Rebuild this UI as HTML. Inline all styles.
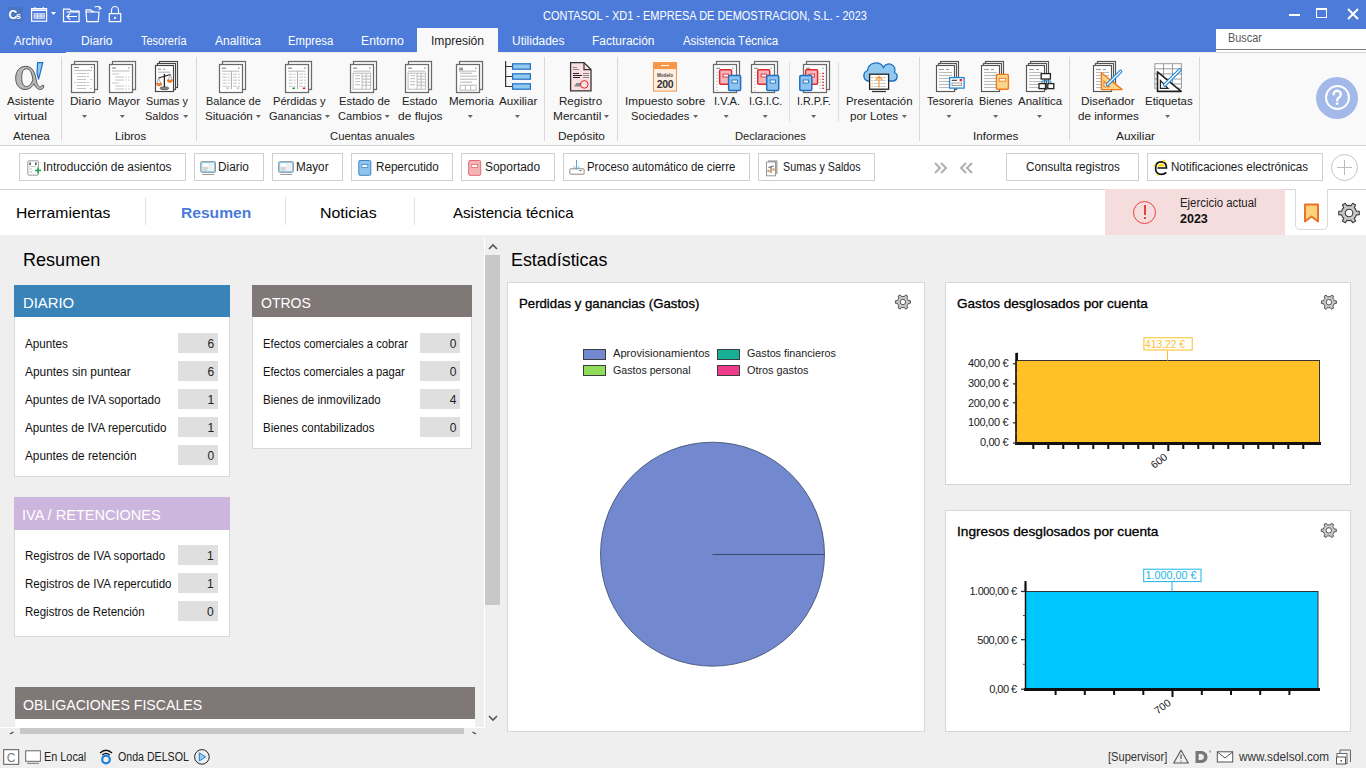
<!DOCTYPE html>
<html><head><meta charset="utf-8"><style>
*{margin:0;padding:0;box-sizing:border-box}
html,body{width:1366px;height:768px;overflow:hidden;background:#efefef;font-family:"Liberation Sans", sans-serif}
.a{position:absolute}
.t{position:absolute;white-space:nowrap;line-height:1;font-family:"Liberation Sans", sans-serif}
svg{position:absolute;overflow:visible}
</style></head><body>
<!-- title bar -->
<div class="a" style="left:0;top:0;width:1366px;height:52px;background:#4c7bd9"></div><div class="a" style="left:0;top:52px;width:1366px;height:1px;background:#ecebe8"></div><div class="a" style="left:0;top:52px;width:66px;height:1px;background:#3f74d8"></div>
<div class="a" style="left:417px;top:28px;width:81px;height:25px;background:#f9f9f9"></div>
<div class="a" style="left:1216px;top:29px;width:150px;height:24px;background:#fff"></div><div class="a" style="left:1216px;top:49px;width:150px;height:1px;background:#7a7a7a"></div><div class="a" style="left:1216px;top:52px;width:150px;height:1px;background:#d2d2d2"></div>
<!-- Cs icon -->
<div class="a" style="left:8px;top:7px;width:15px;height:14px;background:#4a76bf"></div>
<svg style="left:0;top:0" width="130" height="30">
  <text x="8.6" y="18.5" font-family="Liberation Sans" font-size="12" font-weight="bold" fill="#fff">C</text>
  <text x="16" y="18.5" font-family="Liberation Sans" font-size="8.5" font-weight="bold" fill="#fff">s</text>
</svg>
<svg style="left:0;top:0" width="130" height="30" fill="none" stroke="#fff" stroke-width="1.2">
  <rect x="31.6" y="8.6" width="15" height="12.6"/><line x1="31.6" y1="10.2" x2="46.6" y2="10.2" stroke-width="1.6"/>
  <line x1="35" y1="7" x2="35" y2="9" /><line x1="43.3" y1="7" x2="43.3" y2="9"/>
  <rect x="34" y="13.5" width="10.5" height="5" stroke-width="0.7" stroke="#e0e6f5" fill="#9fb5e8"/>
  <path d="M34 16 h10.5 M37.5 13.5 v5 M41 13.5 v5" stroke-width="0.6" stroke="#fff"/>
  <path d="M51 12 h5 l-2.5 3z" fill="#fff" stroke="none"/>
  <path d="M63.5 9.2 h6 l1.8 2 h7.8 v10.5 h-15.6z"/><path d="M66.5 12 h12.8"/><path d="M77 16.5 h-10 m3.2 -3.2 l-3.2 3.2 3.2 3.2"/>
  <path d="M86 12 h13 l-0.8 9.6 h-11.4z M86 12 v-2.2 h4.5 l1.5 1.5 h2"/><path d="M94.5 7 q4 -1.5 6.5 1.5 m-2.2 -2.3 l2.2 2.3 -2.5 1"/>
  <rect x="109.3" y="13.6" width="11.4" height="8"/><path d="M111.5 13.6 v-3.3 a3.5 3.8 0 0 1 7 0 v3.3"/><line x1="115" y1="16.8" x2="115" y2="19" stroke-width="1.6"/>
</svg>
<!-- window controls -->
<div class="a" style="left:1289px;top:14px;width:11px;height:2px;background:#fff"></div>
<div class="a" style="left:1316px;top:8px;width:11px;height:10px;border:1.5px solid #fff;border-top-width:2.5px"></div>
<svg style="left:1346px;top:7px" width="14" height="14" stroke="#fff" stroke-width="2"><path d="M2 2 L12 12 M12 2 L2 12"/></svg>

<!-- ribbon -->
<div class="a" style="left:0;top:53px;width:1366px;height:93px;background:#f9f9f9;border-bottom:1px solid #d4d4d4"></div>
<div class="a" style="left:61px;top:57px;width:1px;height:84px;background:#d8d8d8"></div>
<div class="a" style="left:196px;top:57px;width:1px;height:84px;background:#d8d8d8"></div>
<div class="a" style="left:544px;top:57px;width:1px;height:84px;background:#d8d8d8"></div>
<div class="a" style="left:617px;top:57px;width:1px;height:84px;background:#d8d8d8"></div>
<div class="a" style="left:919px;top:57px;width:1px;height:84px;background:#d8d8d8"></div>
<div class="a" style="left:1069px;top:57px;width:1px;height:84px;background:#d8d8d8"></div>
<div class="a" style="left:1199px;top:57px;width:1px;height:84px;background:#d8d8d8"></div>
<div class="a" style="left:789px;top:62px;width:1px;height:60px;background:#dedede"></div>
<div class="a" style="left:838px;top:62px;width:1px;height:60px;background:#dedede"></div>
<!-- help circle -->
<div class="a" style="left:1316px;top:77px;width:42px;height:42px;border-radius:50%;background:#a3b9ea"></div>
<div class="a" style="left:1324.5px;top:85.3px;width:25px;height:25px;border-radius:50%;border:2.3px solid #fff"></div>
<svg style="left:0;top:0" width="1366" height="130"><path d="M1333.6 94.3 a3.6 3.5 0 1 1 5.6 2.9 c-1.4 0.9 -2 1.5 -2 3" fill="none" stroke="#fff" stroke-width="2.4" stroke-linecap="round"/><circle cx="1337.1" cy="103.6" r="1.4" fill="#fff"/></svg>

<!-- toolbar -->
<div class="a" style="left:0;top:146px;width:1366px;height:44px;background:#fff;border-bottom:1px solid #d2d2d2"></div>
<div class="a" style="left:19px;top:153px;width:167px;height:28px;border:1px solid #cfcfcf"></div>
<div class="a" style="left:194px;top:153px;width:70px;height:28px;border:1px solid #cfcfcf"></div>
<div class="a" style="left:272px;top:153px;width:71px;height:28px;border:1px solid #cfcfcf"></div>
<div class="a" style="left:351px;top:153px;width:102px;height:28px;border:1px solid #cfcfcf"></div>
<div class="a" style="left:461px;top:153px;width:94px;height:28px;border:1px solid #cfcfcf"></div>
<div class="a" style="left:563px;top:153px;width:187px;height:28px;border:1px solid #cfcfcf"></div>
<div class="a" style="left:758px;top:153px;width:117px;height:28px;border:1px solid #cfcfcf"></div>
<div class="a" style="left:1006px;top:153px;width:133px;height:28px;border:1px solid #cfcfcf"></div>
<div class="a" style="left:1147px;top:153px;width:176px;height:28px;border:1px solid #cfcfcf"></div>
<div class="a" style="left:1331px;top:154px;width:27px;height:27px;border-radius:50%;border:1px solid #c4c4c4"></div>
<div class="a" style="left:1337px;top:167px;width:15px;height:1px;background:#bbb"></div>
<div class="a" style="left:1344px;top:160px;width:1px;height:15px;background:#bbb"></div>
<svg style="left:930px;top:160px" width="50" height="16" fill="none" stroke="#b0b0b0" stroke-width="2"><path d="M5 3 l5 5 -5 5 M11 3 l5 5 -5 5 M36 3 l-5 5 5 5 M42 3 l-5 5 5 5"/></svg>

<!-- tab bar -->
<div class="a" style="left:0;top:190px;width:1366px;height:45px;background:#fff"></div>
<div class="a" style="left:145px;top:197px;width:1px;height:28px;background:#e2e2e2"></div>
<div class="a" style="left:285px;top:197px;width:1px;height:28px;background:#e2e2e2"></div>
<div class="a" style="left:414px;top:197px;width:1px;height:28px;background:#e2e2e2"></div>
<div class="a" style="left:1105px;top:189px;width:180px;height:46px;background:#f5dcdd"></div>
<div class="a" style="left:1133px;top:201px;width:23px;height:23px;border-radius:50%;border:1.3px solid #e8423a"></div>
<div class="a" style="left:1143.5px;top:205px;width:2px;height:10px;background:#e8423a"></div>
<div class="a" style="left:1143.5px;top:217px;width:2px;height:2px;background:#e8423a"></div>
<div class="a" style="left:1295px;top:189px;width:33px;height:41px;border:1px solid #dadada;border-top:none;border-radius:0 0 5px 5px;background:#fff"></div>
<svg style="left:1303px;top:203px" width="18" height="20"><path d="M2 1.5 h13 v17 l-6.5 -5 -6.5 5z" fill="#fdd27a" stroke="#e9752a" stroke-width="2" stroke-linejoin="round"/></svg>

<!-- main: left scroll panel -->
<div class="a" style="left:484px;top:238px;width:1px;height:489px;background:#fff"></div>
<div class="a" style="left:0;top:727px;width:485px;height:1px;background:#fff"></div>
<div class="a" style="left:485px;top:255px;width:15px;height:350px;background:#c8c8c8"></div>
<svg style="left:486px;top:242px" width="14" height="10" fill="none" stroke="#555" stroke-width="1.6"><path d="M3 7 l4 -4 4 4"/></svg>
<svg style="left:486px;top:713px" width="14" height="10" fill="none" stroke="#555" stroke-width="1.6"><path d="M3 3 l4 4 4 -4"/></svg>
<div class="a" style="left:20px;top:728px;width:444px;height:6px;background:#c8c8c8"></div>

<!-- DIARIO card -->
<div class="a" style="left:14px;top:285px;width:216px;height:192px;background:#fff;border:1px solid #d9d9d9"></div>
<div class="a" style="left:14px;top:285px;width:216px;height:32px;background:#3a83b9"></div>
<!-- OTROS card -->
<div class="a" style="left:252px;top:285px;width:220px;height:164px;background:#fff;border:1px solid #d9d9d9"></div>
<div class="a" style="left:252px;top:285px;width:220px;height:32px;background:#807777"></div>
<!-- IVA card -->
<div class="a" style="left:14px;top:497px;width:216px;height:140px;background:#fff;border:1px solid #d9d9d9"></div>
<div class="a" style="left:14px;top:497px;width:216px;height:33px;background:#cdb6dd"></div>
<!-- OBLIGACIONES -->
<div class="a" style="left:15px;top:687px;width:460px;height:40px;background:#fff"></div>
<div class="a" style="left:15px;top:687px;width:460px;height:32px;background:#807777"></div>
<div class="a" style="left:178px;top:333px;width:40px;height:20px;background:#dfdfdf"></div>
<div class="a" style="left:178px;top:361px;width:40px;height:20px;background:#dfdfdf"></div>
<div class="a" style="left:178px;top:389px;width:40px;height:20px;background:#dfdfdf"></div>
<div class="a" style="left:178px;top:417px;width:40px;height:20px;background:#dfdfdf"></div>
<div class="a" style="left:178px;top:445px;width:40px;height:20px;background:#dfdfdf"></div>
<div class="a" style="left:420px;top:333px;width:40px;height:20px;background:#dfdfdf"></div>
<div class="a" style="left:420px;top:361px;width:40px;height:20px;background:#dfdfdf"></div>
<div class="a" style="left:420px;top:389px;width:40px;height:20px;background:#dfdfdf"></div>
<div class="a" style="left:420px;top:417px;width:40px;height:20px;background:#dfdfdf"></div>
<div class="a" style="left:178px;top:545px;width:40px;height:20px;background:#dfdfdf"></div>
<div class="a" style="left:178px;top:573px;width:40px;height:20px;background:#dfdfdf"></div>
<div class="a" style="left:178px;top:601px;width:40px;height:20px;background:#dfdfdf"></div>
<!-- stats cards -->
<div class="a" style="left:507px;top:282px;width:418px;height:450px;background:#fff;border:1px solid #d6d6d6"></div>
<div class="a" style="left:945px;top:282px;width:406px;height:203px;background:#fff;border:1px solid #d6d6d6"></div>
<div class="a" style="left:945px;top:510px;width:406px;height:222px;background:#fff;border:1px solid #d6d6d6"></div>
<!-- legend -->
<div class="a" style="left:583px;top:349px;width:23px;height:11px;background:#7389cf;border:1px solid #3d3d3d"></div>
<div class="a" style="left:717px;top:349px;width:23px;height:11px;background:#17b097;border:1px solid #3d3d3d"></div>
<div class="a" style="left:583px;top:365px;width:23px;height:11px;background:#8fdd5a;border:1px solid #3d3d3d"></div>
<div class="a" style="left:717px;top:365px;width:23px;height:11px;background:#ef3b8c;border:1px solid #3d3d3d"></div>
<!-- pie -->
<svg style="left:0;top:0" width="1366" height="768">
  <circle cx="712.5" cy="554.2" r="112" fill="#7389cf" stroke="#39476a" stroke-width="0.8"/>
  <line x1="712.5" y1="554.5" x2="824.5" y2="554.5" stroke="#39476a" stroke-width="1"/>
</svg>
<!-- bar chart 1 -->
<svg style="left:0;top:0" width="1366" height="768">
  <rect x="1016" y="360.5" width="303.5" height="82" fill="#ffc125" stroke="#333" stroke-width="1"/>
  <line x1="1015" y1="443.5" x2="1321" y2="443.5" stroke="#111" stroke-width="3"/>
  <line x1="1016" y1="353" x2="1016" y2="444" stroke="#111" stroke-width="1.5"/>
</svg>
<svg style="left:0;top:0" width="1366" height="768">
  <rect x="1025.5" y="591.5" width="292.5" height="98" fill="#00c8ff" stroke="#333" stroke-width="1"/>
  <line x1="1024" y1="689.5" x2="1320" y2="689.5" stroke="#111" stroke-width="3"/>
  <line x1="1025.5" y1="583" x2="1025.5" y2="690" stroke="#111" stroke-width="1.5"/>
</svg>
<svg style="left:0;top:0" width="1366" height="150"><rect x="74.50" y="61.50" width="23.00" height="28.00" fill="#fff" stroke="#6a6a6a" stroke-width="1.25"/><rect x="71.50" y="64.50" width="23.00" height="28.00" fill="#fff" stroke="#6a6a6a" stroke-width="1.25"/><line x1="74.0" y1="67.5" x2="79.0" y2="67.5" stroke="#888" stroke-width="1.2"/><line x1="91.0" y1="67.5" x2="92.0" y2="67.5" stroke="#666" stroke-width="1.2"/><line x1="74.0" y1="70.5" x2="92.0" y2="70.5" stroke="#c4c4c4" stroke-width="1.2"/><line x1="77.0" y1="73.5" x2="86.0" y2="73.5" stroke="#c4c4c4" stroke-width="1"/><line x1="87.0" y1="73.5" x2="89.0" y2="73.5" stroke="#c4c4c4" stroke-width="1"/><line x1="74.0" y1="73.5" x2="75.5" y2="73.5" stroke="#c4c4c4" stroke-width="1"/><line x1="77.0" y1="76.5" x2="86.0" y2="76.5" stroke="#c4c4c4" stroke-width="1"/><line x1="87.0" y1="76.5" x2="89.0" y2="76.5" stroke="#c4c4c4" stroke-width="1"/><line x1="77.0" y1="79.5" x2="86.0" y2="79.5" stroke="#c4c4c4" stroke-width="1"/><line x1="90.0" y1="79.5" x2="92.0" y2="79.5" stroke="#c4c4c4" stroke-width="1"/><line x1="77.0" y1="82.5" x2="86.0" y2="82.5" stroke="#c4c4c4" stroke-width="1"/><line x1="87.0" y1="82.5" x2="89.0" y2="82.5" stroke="#c4c4c4" stroke-width="1"/><line x1="74.0" y1="82.5" x2="75.5" y2="82.5" stroke="#c4c4c4" stroke-width="1"/><line x1="77.0" y1="85.5" x2="86.0" y2="85.5" stroke="#c4c4c4" stroke-width="1"/><line x1="87.0" y1="85.5" x2="89.0" y2="85.5" stroke="#c4c4c4" stroke-width="1"/><line x1="77.0" y1="88.5" x2="86.0" y2="88.5" stroke="#c4c4c4" stroke-width="1"/><line x1="90.0" y1="88.5" x2="92.0" y2="88.5" stroke="#c4c4c4" stroke-width="1"/><rect x="112.50" y="61.50" width="23.00" height="28.00" fill="#fff" stroke="#6a6a6a" stroke-width="1.25"/><rect x="109.50" y="64.50" width="23.00" height="28.00" fill="#fff" stroke="#6a6a6a" stroke-width="1.25"/><line x1="112.0" y1="68.0" x2="116.0" y2="68.0" stroke="#888" stroke-width="1.2"/><line x1="128.0" y1="68.0" x2="129.5" y2="68.0" stroke="#888" stroke-width="1.2"/><line x1="112.0" y1="71.0" x2="129.5" y2="71.0" stroke="#c4c4c4" stroke-width="1.2"/><line x1="112.0" y1="74.0" x2="119.0" y2="74.0" stroke="#c4c4c4" stroke-width="1"/><line x1="112.0" y1="83.0" x2="119.0" y2="83.0" stroke="#c4c4c4" stroke-width="1"/><line x1="115.0" y1="77.0" x2="124.0" y2="77.0" stroke="#c4c4c4" stroke-width="1"/><line x1="125.5" y1="77.0" x2="127.0" y2="77.0" stroke="#c4c4c4" stroke-width="1"/><line x1="128.0" y1="77.0" x2="129.5" y2="77.0" stroke="#c4c4c4" stroke-width="1"/><line x1="115.0" y1="80.0" x2="124.0" y2="80.0" stroke="#c4c4c4" stroke-width="1"/><line x1="125.5" y1="80.0" x2="127.0" y2="80.0" stroke="#c4c4c4" stroke-width="1"/><line x1="128.0" y1="80.0" x2="129.5" y2="80.0" stroke="#c4c4c4" stroke-width="1"/><line x1="115.0" y1="86.0" x2="124.0" y2="86.0" stroke="#c4c4c4" stroke-width="1"/><line x1="125.5" y1="86.0" x2="127.0" y2="86.0" stroke="#c4c4c4" stroke-width="1"/><line x1="128.0" y1="86.0" x2="129.5" y2="86.0" stroke="#c4c4c4" stroke-width="1"/><line x1="115.0" y1="89.0" x2="124.0" y2="89.0" stroke="#c4c4c4" stroke-width="1"/><line x1="125.5" y1="89.0" x2="127.0" y2="89.0" stroke="#c4c4c4" stroke-width="1"/><line x1="128.0" y1="89.0" x2="129.5" y2="89.0" stroke="#c4c4c4" stroke-width="1"/><rect x="159.50" y="61.50" width="18.00" height="26.00" fill="#fff" stroke="#444" stroke-width="1.15"/><rect x="157.50" y="63.50" width="18.00" height="26.00" fill="#fff" stroke="#444" stroke-width="1.15"/><rect x="155.50" y="65.50" width="18.00" height="26.00" fill="#fff" stroke="#444" stroke-width="1.15"/><line x1="158.1" y1="69.2" x2="161.1" y2="69.2" stroke="#999" stroke-width="1.2"/><line x1="163.1" y1="69.2" x2="165.1" y2="69.2" stroke="#999" stroke-width="1.2"/><line x1="158.1" y1="72.2" x2="170.6" y2="72.2" stroke="#bbb" stroke-width="1.2"/><line x1="164.4" y1="74" x2="164.4" y2="87" stroke="#222" stroke-width="1.3"/><line x1="158.5" y1="78" x2="170.5" y2="74.5" stroke="#222" stroke-width="1.3"/><path d="M156.5 83.5 a2.6 2.4 0 0 0 5.2 0z" fill="#f08a3a" stroke="#e07020" stroke-width="0.8"/><path d="M167.3 80 a2.6 2.4 0 0 0 5.2 0z" fill="#f08a3a" stroke="#e07020" stroke-width="0.8"/><line x1="158.5" y1="78" x2="157" y2="83.5" stroke="#777" stroke-width="0.6"/><line x1="158.5" y1="78" x2="161" y2="83.5" stroke="#777" stroke-width="0.6"/><line x1="170.5" y1="74.5" x2="168" y2="80" stroke="#777" stroke-width="0.6"/><line x1="170.5" y1="74.5" x2="172" y2="80" stroke="#777" stroke-width="0.6"/><ellipse cx="164.4" cy="88.2" rx="4.5" ry="1.5" fill="#888" stroke="#333" stroke-width="0.6"/><rect x="222.50" y="61.50" width="23.00" height="28.00" fill="#fff" stroke="#6a6a6a" stroke-width="1.25"/><rect x="219.50" y="64.50" width="23.00" height="28.00" fill="#fff" stroke="#6a6a6a" stroke-width="1.25"/><line x1="222.0" y1="68.2" x2="226.0" y2="68.2" stroke="#888" stroke-width="1.2"/><line x1="238.0" y1="68.2" x2="239.5" y2="68.2" stroke="#888" stroke-width="1.2"/><line x1="222.0" y1="71.2" x2="239.5" y2="71.2" stroke="#c4c4c4" stroke-width="1.2"/><line x1="231.4" y1="71.2" x2="231.4" y2="89.2" stroke="#aaa" stroke-width="1"/><line x1="222.5" y1="74.2" x2="226.5" y2="74.2" stroke="#c4c4c4" stroke-width="1"/><line x1="227.5" y1="74.2" x2="229.5" y2="74.2" stroke="#c4c4c4" stroke-width="1"/><line x1="233.0" y1="74.2" x2="237.0" y2="74.2" stroke="#c4c4c4" stroke-width="1"/><line x1="238.0" y1="74.2" x2="240.0" y2="74.2" stroke="#c4c4c4" stroke-width="1"/><line x1="222.5" y1="77.2" x2="226.5" y2="77.2" stroke="#c4c4c4" stroke-width="1"/><line x1="227.5" y1="77.2" x2="229.5" y2="77.2" stroke="#c4c4c4" stroke-width="1"/><line x1="233.0" y1="77.2" x2="237.0" y2="77.2" stroke="#c4c4c4" stroke-width="1"/><line x1="238.0" y1="77.2" x2="240.0" y2="77.2" stroke="#c4c4c4" stroke-width="1"/><line x1="222.5" y1="80.2" x2="226.5" y2="80.2" stroke="#c4c4c4" stroke-width="1"/><line x1="227.5" y1="80.2" x2="229.5" y2="80.2" stroke="#c4c4c4" stroke-width="1"/><line x1="233.0" y1="80.2" x2="237.0" y2="80.2" stroke="#c4c4c4" stroke-width="1"/><line x1="238.0" y1="80.2" x2="240.0" y2="80.2" stroke="#c4c4c4" stroke-width="1"/><line x1="222.5" y1="83.2" x2="226.5" y2="83.2" stroke="#c4c4c4" stroke-width="1"/><line x1="227.5" y1="83.2" x2="229.5" y2="83.2" stroke="#c4c4c4" stroke-width="1"/><line x1="233.0" y1="83.2" x2="237.0" y2="83.2" stroke="#c4c4c4" stroke-width="1"/><line x1="238.0" y1="83.2" x2="240.0" y2="83.2" stroke="#c4c4c4" stroke-width="1"/><line x1="222.5" y1="86.2" x2="226.5" y2="86.2" stroke="#c4c4c4" stroke-width="1"/><line x1="227.5" y1="86.2" x2="229.5" y2="86.2" stroke="#c4c4c4" stroke-width="1"/><line x1="233.0" y1="86.2" x2="237.0" y2="86.2" stroke="#c4c4c4" stroke-width="1"/><line x1="238.0" y1="86.2" x2="240.0" y2="86.2" stroke="#c4c4c4" stroke-width="1"/><rect x="226.3" y="87.2" width="2.5" height="2" fill="#ccc"/><rect x="236.7" y="87.2" width="2.5" height="2" fill="#ccc"/><rect x="288.50" y="61.50" width="23.00" height="28.00" fill="#fff" stroke="#6a6a6a" stroke-width="1.25"/><rect x="285.50" y="64.50" width="23.00" height="28.00" fill="#fff" stroke="#6a6a6a" stroke-width="1.25"/><line x1="288.1" y1="68.2" x2="292.1" y2="68.2" stroke="#888" stroke-width="1.2"/><line x1="304.1" y1="68.2" x2="305.6" y2="68.2" stroke="#888" stroke-width="1.2"/><line x1="288.1" y1="71.2" x2="305.6" y2="71.2" stroke="#c4c4c4" stroke-width="1.2"/><line x1="297.5" y1="71.2" x2="297.5" y2="89.2" stroke="#aaa" stroke-width="1"/><line x1="288.6" y1="74.2" x2="292.6" y2="74.2" stroke="#c4c4c4" stroke-width="1"/><line x1="293.6" y1="74.2" x2="295.6" y2="74.2" stroke="#c4c4c4" stroke-width="1"/><line x1="299.1" y1="74.2" x2="303.1" y2="74.2" stroke="#c4c4c4" stroke-width="1"/><line x1="304.1" y1="74.2" x2="306.1" y2="74.2" stroke="#c4c4c4" stroke-width="1"/><line x1="288.6" y1="77.2" x2="292.6" y2="77.2" stroke="#c4c4c4" stroke-width="1"/><line x1="293.6" y1="77.2" x2="295.6" y2="77.2" stroke="#c4c4c4" stroke-width="1"/><line x1="299.1" y1="77.2" x2="303.1" y2="77.2" stroke="#c4c4c4" stroke-width="1"/><line x1="304.1" y1="77.2" x2="306.1" y2="77.2" stroke="#c4c4c4" stroke-width="1"/><line x1="288.6" y1="80.2" x2="292.6" y2="80.2" stroke="#c4c4c4" stroke-width="1"/><line x1="293.6" y1="80.2" x2="295.6" y2="80.2" stroke="#c4c4c4" stroke-width="1"/><line x1="299.1" y1="80.2" x2="303.1" y2="80.2" stroke="#c4c4c4" stroke-width="1"/><line x1="304.1" y1="80.2" x2="306.1" y2="80.2" stroke="#c4c4c4" stroke-width="1"/><line x1="288.6" y1="83.2" x2="292.6" y2="83.2" stroke="#c4c4c4" stroke-width="1"/><line x1="293.6" y1="83.2" x2="295.6" y2="83.2" stroke="#c4c4c4" stroke-width="1"/><line x1="299.1" y1="83.2" x2="303.1" y2="83.2" stroke="#c4c4c4" stroke-width="1"/><line x1="304.1" y1="83.2" x2="306.1" y2="83.2" stroke="#c4c4c4" stroke-width="1"/><line x1="288.6" y1="86.2" x2="292.6" y2="86.2" stroke="#c4c4c4" stroke-width="1"/><line x1="293.6" y1="86.2" x2="295.6" y2="86.2" stroke="#c4c4c4" stroke-width="1"/><line x1="299.1" y1="86.2" x2="303.1" y2="86.2" stroke="#c4c4c4" stroke-width="1"/><line x1="304.1" y1="86.2" x2="306.1" y2="86.2" stroke="#c4c4c4" stroke-width="1"/><rect x="292.40000000000003" y="87.5" width="2.5" height="1.6" fill="#1a9a2a"/><rect x="302.8" y="87.5" width="2.5" height="1.6" fill="#e21b1b"/><rect x="353.50" y="61.50" width="23.00" height="28.00" fill="#fff" stroke="#6a6a6a" stroke-width="1.25"/><rect x="350.50" y="64.50" width="23.00" height="28.00" fill="#fff" stroke="#6a6a6a" stroke-width="1.25"/><line x1="353.1" y1="68.2" x2="357.1" y2="68.2" stroke="#888" stroke-width="1.2"/><line x1="369.1" y1="68.2" x2="370.6" y2="68.2" stroke="#888" stroke-width="1.2"/><line x1="353.1" y1="71.2" x2="370.6" y2="71.2" stroke="#c4c4c4" stroke-width="1.2"/><rect x="353.1" y="73.2" width="17.5" height="16" fill="none" stroke="#bbb" stroke-width="1"/><line x1="362.1" y1="73.2" x2="362.1" y2="89.2" stroke="#bbb" stroke-width="1"/><line x1="366.1" y1="73.2" x2="366.1" y2="89.2" stroke="#bbb" stroke-width="1"/><line x1="362.1" y1="76.2" x2="370.6" y2="76.2" stroke="#bbb" stroke-width="1"/><line x1="355.1" y1="75.7" x2="360.1" y2="75.7" stroke="#bbb" stroke-width="1"/><line x1="362.1" y1="79.2" x2="370.6" y2="79.2" stroke="#bbb" stroke-width="1"/><line x1="355.1" y1="78.7" x2="360.1" y2="78.7" stroke="#bbb" stroke-width="1"/><line x1="362.1" y1="82.2" x2="370.6" y2="82.2" stroke="#bbb" stroke-width="1"/><line x1="355.1" y1="81.7" x2="360.1" y2="81.7" stroke="#bbb" stroke-width="1"/><line x1="362.1" y1="85.2" x2="370.6" y2="85.2" stroke="#bbb" stroke-width="1"/><line x1="355.1" y1="84.7" x2="360.1" y2="84.7" stroke="#bbb" stroke-width="1"/><rect x="408.50" y="61.50" width="23.00" height="28.00" fill="#fff" stroke="#6a6a6a" stroke-width="1.25"/><rect x="405.50" y="64.50" width="23.00" height="28.00" fill="#fff" stroke="#6a6a6a" stroke-width="1.25"/><line x1="408.1" y1="68.2" x2="412.1" y2="68.2" stroke="#888" stroke-width="1.2"/><line x1="424.1" y1="68.2" x2="425.6" y2="68.2" stroke="#888" stroke-width="1.2"/><line x1="408.1" y1="71.2" x2="425.6" y2="71.2" stroke="#c4c4c4" stroke-width="1.2"/><rect x="408.1" y="73.2" width="17.5" height="16" fill="none" stroke="#bbb" stroke-width="1"/><line x1="417.1" y1="73.2" x2="417.1" y2="89.2" stroke="#bbb" stroke-width="1"/><line x1="421.1" y1="73.2" x2="421.1" y2="89.2" stroke="#bbb" stroke-width="1"/><line x1="417.1" y1="76.2" x2="425.6" y2="76.2" stroke="#bbb" stroke-width="1"/><line x1="410.1" y1="75.7" x2="415.1" y2="75.7" stroke="#bbb" stroke-width="1"/><line x1="417.1" y1="79.2" x2="425.6" y2="79.2" stroke="#bbb" stroke-width="1"/><line x1="410.1" y1="78.7" x2="415.1" y2="78.7" stroke="#bbb" stroke-width="1"/><line x1="417.1" y1="82.2" x2="425.6" y2="82.2" stroke="#bbb" stroke-width="1"/><line x1="410.1" y1="81.7" x2="415.1" y2="81.7" stroke="#bbb" stroke-width="1"/><line x1="417.1" y1="85.2" x2="425.6" y2="85.2" stroke="#bbb" stroke-width="1"/><line x1="410.1" y1="84.7" x2="415.1" y2="84.7" stroke="#bbb" stroke-width="1"/><rect x="459.50" y="61.50" width="23.00" height="28.00" fill="#fff" stroke="#6a6a6a" stroke-width="1.25"/><rect x="456.50" y="64.50" width="23.00" height="28.00" fill="#fff" stroke="#6a6a6a" stroke-width="1.25"/><line x1="459.1" y1="68.2" x2="463.1" y2="68.2" stroke="#888" stroke-width="1.2"/><line x1="475.1" y1="68.2" x2="476.6" y2="68.2" stroke="#888" stroke-width="1.2"/><line x1="459.1" y1="71.2" x2="476.6" y2="71.2" stroke="#c4c4c4" stroke-width="1.2"/><line x1="459.1" y1="69.7" x2="463.1" y2="69.7" stroke="#888" stroke-width="1.2"/><line x1="460.1" y1="73.2" x2="472.1" y2="73.2" stroke="#bbb" stroke-width="1.1"/><line x1="460.1" y1="76.2" x2="477.1" y2="76.2" stroke="#bbb" stroke-width="1.1"/><line x1="460.1" y1="79.2" x2="477.1" y2="79.2" stroke="#bbb" stroke-width="1.1"/><line x1="460.1" y1="82.2" x2="472.1" y2="82.2" stroke="#bbb" stroke-width="1.1"/><rect x="460.1" y="85.2" width="16" height="5" fill="none" stroke="#bbb" stroke-width="1"/><line x1="465.40000000000003" y1="85.2" x2="465.40000000000003" y2="90.2" stroke="#bbb"/><line x1="470.70000000000005" y1="85.2" x2="470.70000000000005" y2="90.2" stroke="#bbb"/><path d="M505.6 61 V86.5 H512.3 M505.6 66.5 H512.3 M505.6 76.5 H512.3" fill="none" stroke="#333" stroke-width="1.2"/><rect x="512.6" y="63.8" width="17.8" height="5.4" fill="#92c9f0" stroke="#1f6fc1" stroke-width="1.2"/><rect x="512.6" y="73.8" width="17.8" height="5.4" fill="#92c9f0" stroke="#1f6fc1" stroke-width="1.2"/><rect x="512.6" y="83.8" width="17.8" height="5.4" fill="#92c9f0" stroke="#1f6fc1" stroke-width="1.2"/><path d="M570.6 62.6 H584 L591 69.6 V90.9 H570.6Z" fill="#fcdfe3" stroke="#333" stroke-width="1.3"/><path d="M584 62.6 V69.6 H591" fill="none" stroke="#333" stroke-width="1.2"/><line x1="573.0" y1="67.5" x2="577.0" y2="67.5" stroke="#888" stroke-width="1"/><line x1="573.0" y1="69.5" x2="579.0" y2="69.5" stroke="#888" stroke-width="1"/><line x1="573.0" y1="73.5" x2="579.0" y2="73.5" stroke="#222" stroke-width="1"/><line x1="583.0" y1="73.5" x2="589.0" y2="73.5" stroke="#888" stroke-width="1"/><line x1="573.0" y1="75.5" x2="582.0" y2="75.5" stroke="#222" stroke-width="1"/><line x1="583.0" y1="75.5" x2="589.0" y2="75.5" stroke="#888" stroke-width="1"/><line x1="573.0" y1="77.5" x2="580.0" y2="77.5" stroke="#222" stroke-width="1"/><line x1="583.0" y1="77.5" x2="589.0" y2="77.5" stroke="#888" stroke-width="1"/><path d="M574 86.5 l2.5 -3.5 h5 l-1 3.5z" fill="#888"/><circle cx="584.3" cy="84.4" r="3.8" fill="none" stroke="#e0282e" stroke-width="1"/><rect x="653.5" y="62.6" width="23" height="28.5" fill="#fdeee4" stroke="#f79646" stroke-width="1"/><rect x="653" y="62.1" width="24" height="7" fill="#f79646"/><line x1="661.0" y1="65.5" x2="669.0" y2="65.5" stroke="#fff" stroke-width="1"/><text x="665" y="76.5" font-family="Liberation Sans" font-size="4.6" font-weight="bold" fill="#444" text-anchor="middle">Modelo</text><text x="665" y="88.3" font-family="Liberation Sans" font-size="10.5" font-weight="bold" fill="#333" text-anchor="middle" letter-spacing="-0.3">200</text><rect x="716.50" y="61.50" width="23.00" height="28.00" fill="#fff" stroke="#6a6a6a" stroke-width="1.25"/><rect x="713.50" y="64.50" width="23.00" height="28.00" fill="#fff" stroke="#6a6a6a" stroke-width="1.25"/><line x1="716.1" y1="68.3" x2="720.1" y2="68.3" stroke="#888" stroke-width="1.1"/><line x1="732.1" y1="68.3" x2="733.6" y2="68.3" stroke="#888" stroke-width="1.1"/><line x1="716.1" y1="72.3" x2="717.6" y2="72.3" stroke="#bbb" stroke-width="1"/><line x1="716.1" y1="75.3" x2="717.6" y2="75.3" stroke="#bbb" stroke-width="1"/><line x1="716.1" y1="78.3" x2="717.6" y2="78.3" stroke="#bbb" stroke-width="1"/><line x1="716.1" y1="81.3" x2="717.6" y2="81.3" stroke="#bbb" stroke-width="1"/><line x1="716.1" y1="84.3" x2="717.6" y2="84.3" stroke="#bbb" stroke-width="1"/><line x1="716.1" y1="87.3" x2="717.6" y2="87.3" stroke="#bbb" stroke-width="1"/><line x1="716.1" y1="90.3" x2="717.6" y2="90.3" stroke="#bbb" stroke-width="1"/><rect x="719.6" y="69.8" width="12" height="14.5" rx="1.2" fill="#f5b7bb" stroke="#e0282e" stroke-width="1.5"/><rect x="723.0" y="74.1" width="5.4" height="2.9" fill="#fff" stroke="#e0282e" stroke-width="0.9"/><rect x="728.6" y="75.6" width="12" height="14.8" rx="1.2" fill="#8fc3ee" stroke="#1f6fc1" stroke-width="1.5"/><rect x="732.0" y="80.0" width="5.4" height="3.0" fill="#fff" stroke="#1f6fc1" stroke-width="0.9"/><rect x="754.50" y="61.50" width="23.00" height="28.00" fill="#fff" stroke="#6a6a6a" stroke-width="1.25"/><rect x="751.50" y="64.50" width="23.00" height="28.00" fill="#fff" stroke="#6a6a6a" stroke-width="1.25"/><line x1="754.2" y1="68.3" x2="758.2" y2="68.3" stroke="#888" stroke-width="1.1"/><line x1="770.2" y1="68.3" x2="771.7" y2="68.3" stroke="#888" stroke-width="1.1"/><line x1="754.2" y1="72.3" x2="755.7" y2="72.3" stroke="#bbb" stroke-width="1"/><line x1="754.2" y1="75.3" x2="755.7" y2="75.3" stroke="#bbb" stroke-width="1"/><line x1="754.2" y1="78.3" x2="755.7" y2="78.3" stroke="#bbb" stroke-width="1"/><line x1="754.2" y1="81.3" x2="755.7" y2="81.3" stroke="#bbb" stroke-width="1"/><line x1="754.2" y1="84.3" x2="755.7" y2="84.3" stroke="#bbb" stroke-width="1"/><line x1="754.2" y1="87.3" x2="755.7" y2="87.3" stroke="#bbb" stroke-width="1"/><line x1="754.2" y1="90.3" x2="755.7" y2="90.3" stroke="#bbb" stroke-width="1"/><rect x="757.7" y="69.8" width="12" height="14.5" rx="1.2" fill="#f5b7bb" stroke="#e0282e" stroke-width="1.5"/><rect x="761.1" y="74.1" width="5.4" height="2.9" fill="#fff" stroke="#e0282e" stroke-width="0.9"/><rect x="766.7" y="75.6" width="12" height="14.8" rx="1.2" fill="#8fc3ee" stroke="#1f6fc1" stroke-width="1.5"/><rect x="770.1" y="80.0" width="5.4" height="3.0" fill="#fff" stroke="#1f6fc1" stroke-width="0.9"/><rect x="806.50" y="61.50" width="23.00" height="28.00" fill="#fff" stroke="#6a6a6a" stroke-width="1.25"/><rect x="803.50" y="64.50" width="23.00" height="28.00" fill="#fff" stroke="#6a6a6a" stroke-width="1.25"/><line x1="806.1" y1="68.3" x2="810.1" y2="68.3" stroke="#888" stroke-width="1.1"/><line x1="822.1" y1="68.3" x2="823.6" y2="68.3" stroke="#888" stroke-width="1.1"/><line x1="819.1" y1="73.3" x2="821.1" y2="73.3" stroke="#bbb" stroke-width="1"/><line x1="822.1" y1="73.3" x2="824.1" y2="73.3" stroke="#e0282e" stroke-width="1.2"/><line x1="819.1" y1="76.3" x2="821.1" y2="76.3" stroke="#bbb" stroke-width="1"/><line x1="822.1" y1="76.3" x2="824.1" y2="76.3" stroke="#e0282e" stroke-width="1.2"/><line x1="819.1" y1="79.3" x2="821.1" y2="79.3" stroke="#bbb" stroke-width="1"/><line x1="822.1" y1="79.3" x2="824.1" y2="79.3" stroke="#e0282e" stroke-width="1.2"/><line x1="819.1" y1="82.3" x2="821.1" y2="82.3" stroke="#bbb" stroke-width="1"/><line x1="822.1" y1="82.3" x2="824.1" y2="82.3" stroke="#e0282e" stroke-width="1.2"/><line x1="819.1" y1="85.3" x2="821.1" y2="85.3" stroke="#bbb" stroke-width="1"/><line x1="822.1" y1="85.3" x2="824.1" y2="85.3" stroke="#e0282e" stroke-width="1.2"/><line x1="819.1" y1="88.3" x2="821.1" y2="88.3" stroke="#bbb" stroke-width="1"/><line x1="822.1" y1="88.3" x2="824.1" y2="88.3" stroke="#e0282e" stroke-width="1.2"/><rect x="805.6" y="69.8" width="12" height="14.5" rx="1.2" fill="#f5b7bb" stroke="#e0282e" stroke-width="1.5"/><rect x="809.0" y="74.1" width="5.4" height="2.9" fill="#fff" stroke="#e0282e" stroke-width="0.9"/><rect x="799.8" y="75.6" width="12" height="14.8" rx="1.2" fill="#8fc3ee" stroke="#1f6fc1" stroke-width="1.5"/><rect x="803.2" y="80.0" width="5.4" height="3.0" fill="#fff" stroke="#1f6fc1" stroke-width="0.9"/><path d="M868 81 a5.5 5.5 0 0 1 -0.5 -10.5 a8.5 8.5 0 0 1 16 -3 a6 6 0 0 1 11 5 a4.5 4.5 0 0 1 -1 8.5z" fill="#92c9f0" stroke="#1f6fc1" stroke-width="1.3"/><rect x="869.6" y="74.2" width="19" height="15" fill="#fff" stroke="#222" stroke-width="1.3"/><line x1="872.0" y1="91.5" x2="886.0" y2="91.5" stroke="#333" stroke-width="1.3"/><line x1="874.0" y1="77.5" x2="886.0" y2="77.5" stroke="#ccc" stroke-width="1"/><line x1="871.5" y1="77.5" x2="872.8" y2="77.5" stroke="#f39b2a" stroke-width="1.2"/><line x1="874.0" y1="80.5" x2="886.0" y2="80.5" stroke="#ccc" stroke-width="1"/><line x1="871.5" y1="80.5" x2="872.8" y2="80.5" stroke="#f39b2a" stroke-width="1.2"/><line x1="874.0" y1="83.5" x2="886.0" y2="83.5" stroke="#ccc" stroke-width="1"/><line x1="871.5" y1="83.5" x2="872.8" y2="83.5" stroke="#f39b2a" stroke-width="1.2"/><line x1="874.0" y1="86.5" x2="886.0" y2="86.5" stroke="#ccc" stroke-width="1"/><line x1="871.5" y1="86.5" x2="872.8" y2="86.5" stroke="#f39b2a" stroke-width="1.2"/><path d="M879 87.5 V76.5 M875.8 80 L879 76.5 L882.2 80" fill="none" stroke="#f39b2a" stroke-width="1.2"/><rect x="940.50" y="61.50" width="18.00" height="26.00" fill="#fff" stroke="#555" stroke-width="1.15"/><rect x="938.50" y="63.50" width="18.00" height="26.00" fill="#fff" stroke="#555" stroke-width="1.15"/><rect x="936.50" y="65.50" width="18.00" height="26.00" fill="#fff" stroke="#555" stroke-width="1.15"/><line x1="939.0" y1="69.5" x2="944.0" y2="69.5" stroke="#999" stroke-width="1.1"/><line x1="946.0" y1="69.5" x2="949.0" y2="69.5" stroke="#999" stroke-width="1.1"/><line x1="939.0" y1="72.5" x2="952.0" y2="72.5" stroke="#bbb" stroke-width="1.1"/><line x1="939.0" y1="75.5" x2="952.0" y2="75.5" stroke="#bbb" stroke-width="1.1"/><line x1="939.0" y1="78.5" x2="952.0" y2="78.5" stroke="#bbb" stroke-width="1.1"/><line x1="939.0" y1="81.5" x2="952.0" y2="81.5" stroke="#bbb" stroke-width="1.1"/><line x1="939.0" y1="84.5" x2="952.0" y2="84.5" stroke="#bbb" stroke-width="1.1"/><line x1="939.0" y1="87.5" x2="952.0" y2="87.5" stroke="#bbb" stroke-width="1.1"/><rect x="949.6" y="77.6" width="14.5" height="10.5" fill="#fff" stroke="#1f86d6" stroke-width="1.3"/><line x1="951.8" y1="80.3" x2="957.0" y2="80.3" stroke="#333" stroke-width="1.1"/><rect x="959.6" y="79" width="2.5" height="2.3" fill="#e0282e"/><rect x="952" y="83" width="9.5" height="2.6" fill="none" stroke="#888" stroke-width="0.8"/><rect x="985.50" y="61.50" width="18.00" height="26.00" fill="#fff" stroke="#555" stroke-width="1.15"/><rect x="983.50" y="63.50" width="18.00" height="26.00" fill="#fff" stroke="#555" stroke-width="1.15"/><rect x="981.50" y="65.50" width="18.00" height="26.00" fill="#fff" stroke="#555" stroke-width="1.15"/><line x1="984.0" y1="69.5" x2="989.0" y2="69.5" stroke="#999" stroke-width="1.1"/><line x1="991.0" y1="69.5" x2="994.0" y2="69.5" stroke="#999" stroke-width="1.1"/><line x1="984.0" y1="72.5" x2="997.0" y2="72.5" stroke="#bbb" stroke-width="1.1"/><line x1="984.0" y1="75.5" x2="997.0" y2="75.5" stroke="#bbb" stroke-width="1.1"/><line x1="984.0" y1="78.5" x2="997.0" y2="78.5" stroke="#bbb" stroke-width="1.1"/><line x1="984.0" y1="81.5" x2="997.0" y2="81.5" stroke="#bbb" stroke-width="1.1"/><line x1="984.0" y1="84.5" x2="997.0" y2="84.5" stroke="#bbb" stroke-width="1.1"/><line x1="984.0" y1="87.5" x2="997.0" y2="87.5" stroke="#bbb" stroke-width="1.1"/><rect x="996.4" y="74.4" width="12" height="14.8" rx="1" fill="#f9d58a" stroke="#f07a22" stroke-width="1.4"/><rect x="999.2" y="78.4" width="6.5" height="2.8" fill="#fff" stroke="#f07a22" stroke-width="0.9"/><rect x="1030.50" y="61.50" width="18.00" height="26.00" fill="#fff" stroke="#555" stroke-width="1.15"/><rect x="1028.50" y="63.50" width="18.00" height="26.00" fill="#fff" stroke="#555" stroke-width="1.15"/><rect x="1026.50" y="65.50" width="18.00" height="26.00" fill="#fff" stroke="#555" stroke-width="1.15"/><line x1="1029.0" y1="69.5" x2="1034.0" y2="69.5" stroke="#999" stroke-width="1.1"/><line x1="1036.0" y1="69.5" x2="1039.0" y2="69.5" stroke="#999" stroke-width="1.1"/><line x1="1029.0" y1="72.5" x2="1042.0" y2="72.5" stroke="#bbb" stroke-width="1.1"/><line x1="1029.0" y1="75.5" x2="1042.0" y2="75.5" stroke="#bbb" stroke-width="1.1"/><line x1="1029.0" y1="78.5" x2="1042.0" y2="78.5" stroke="#bbb" stroke-width="1.1"/><line x1="1029.0" y1="81.5" x2="1042.0" y2="81.5" stroke="#bbb" stroke-width="1.1"/><line x1="1029.0" y1="84.5" x2="1042.0" y2="84.5" stroke="#bbb" stroke-width="1.1"/><line x1="1029.0" y1="87.5" x2="1042.0" y2="87.5" stroke="#bbb" stroke-width="1.1"/><rect x="1041.2" y="73.6" width="9.2" height="5.4" fill="#fff" stroke="#222" stroke-width="1.3"/><path d="M1045.8 79 V81 H1042 V83.4 M1045.8 81 H1050.8 V83.4" fill="none" stroke="#1f86d6" stroke-width="1"/><rect x="1039" y="83.6" width="6.5" height="5" fill="#fff" stroke="#222" stroke-width="1.3"/><rect x="1047.8" y="83.6" width="6" height="5" fill="#fff" stroke="#222" stroke-width="1.3"/><rect x="1097.50" y="61.50" width="18.00" height="26.00" fill="#fff" stroke="#555" stroke-width="1.15"/><rect x="1095.50" y="63.50" width="18.00" height="26.00" fill="#fff" stroke="#555" stroke-width="1.15"/><rect x="1093.50" y="65.50" width="18.00" height="26.00" fill="#fff" stroke="#555" stroke-width="1.15"/><line x1="1096.0" y1="69.5" x2="1101.0" y2="69.5" stroke="#999" stroke-width="1.1"/><line x1="1103.0" y1="69.5" x2="1106.0" y2="69.5" stroke="#999" stroke-width="1.1"/><line x1="1096.0" y1="72.5" x2="1109.0" y2="72.5" stroke="#bbb" stroke-width="1.1"/><line x1="1096.0" y1="75.5" x2="1109.0" y2="75.5" stroke="#bbb" stroke-width="1.1"/><line x1="1096.0" y1="78.5" x2="1109.0" y2="78.5" stroke="#bbb" stroke-width="1.1"/><line x1="1096.0" y1="81.5" x2="1109.0" y2="81.5" stroke="#bbb" stroke-width="1.1"/><line x1="1096.0" y1="84.5" x2="1109.0" y2="84.5" stroke="#bbb" stroke-width="1.1"/><line x1="1096.0" y1="87.5" x2="1109.0" y2="87.5" stroke="#bbb" stroke-width="1.1"/><path d="M1101.4 72.7 V89.6 H1122.2Z" fill="#f9d58a" stroke="#f07a22" stroke-width="1.4" stroke-linejoin="round"/><path d="M1104 81 V86.8 H1109.5Z" fill="#fff" stroke="#f07a22" stroke-width="1.1"/><path d="M1107.5 84.5 L1120.5 71.5" stroke="#1f86d6" stroke-width="3.6" stroke-linecap="round"/><path d="M1107.5 84.5 L1120.5 71.5" stroke="#fff" stroke-width="1.4" stroke-linecap="round"/><rect x="1154.8" y="63.7" width="26.6" height="24.5" fill="#fff" stroke="#9a9a9a" stroke-width="1"/><line x1="1163.6" y1="63.7" x2="1163.6" y2="88.2" stroke="#9a9a9a" stroke-width="1"/><line x1="1172.5" y1="63.7" x2="1172.5" y2="88.2" stroke="#9a9a9a" stroke-width="1"/><line x1="1154.8" y1="68.8" x2="1181.4" y2="68.8" stroke="#9a9a9a" stroke-width="1"/><line x1="1154.8" y1="73.9" x2="1181.4" y2="73.9" stroke="#9a9a9a" stroke-width="1"/><line x1="1154.8" y1="79.0" x2="1181.4" y2="79.0" stroke="#9a9a9a" stroke-width="1"/><line x1="1154.8" y1="84.0" x2="1181.4" y2="84.0" stroke="#9a9a9a" stroke-width="1"/><path d="M1157.5 71.8 V91.4 H1181.2Z" fill="#fff" stroke="#222" stroke-width="1.6" stroke-linejoin="round"/><path d="M1160.4 80.5 V88.3 H1168Z" fill="#fff" stroke="#222" stroke-width="1.2"/><path d="M1164.8 85 L1180 69.8" stroke="#1f86d6" stroke-width="3.6" stroke-linecap="round"/><path d="M1164.8 85 L1180 69.8" stroke="#fff" stroke-width="1.4" stroke-linecap="round"/><path fill-rule="evenodd" d="M25.5 66.3 C 19 66.3 15.7 72 15.7 78.2 C 15.7 84.8 19.5 89.5 25 89.5 C 29.5 89.5 32.5 86.5 34 83.5 C 35 87 37.5 89.5 40.5 89.5 C 42.5 89.5 44 88 43.8 85.5 L 42 85.2 C 41.5 86.4 40.8 86.8 40 86.8 C 38.4 86.8 37.3 85 36.2 80 C 35 73.2 33 66.3 25.5 66.3Z M 26.5 68.8 C 22.5 68.8 21.7 73.5 21.7 77.8 C 21.7 82.5 23 86.5 26.5 86.5 C 29.5 86.5 32 83 32.8 79.5 C 31.8 72.5 30 68.8 26.5 68.8Z" fill="#b8b8b8" stroke="#555" stroke-width="1"/><path d="M37.6 62.6 H42.8 L38.6 79.2 L37 73.5Z" fill="#92c9f0" stroke="#1f6fc1" stroke-width="1.2" stroke-linejoin="round"/><path d="M82.0 115 h5 l-2.5 3z" fill="#666"/><path d="M119.8 115 h5 l-2.5 3z" fill="#666"/><path d="M183.2 115 h5 l-2.5 3z" fill="#666"/><path d="M255.9 115 h5 l-2.5 3z" fill="#666"/><path d="M325.0 115 h5 l-2.5 3z" fill="#666"/><path d="M384.7 115 h5 l-2.5 3z" fill="#666"/><path d="M467.8 115 h5 l-2.5 3z" fill="#666"/><path d="M514.9 115 h5 l-2.5 3z" fill="#666"/><path d="M604.0 115 h5 l-2.5 3z" fill="#666"/><path d="M693.1 115 h5 l-2.5 3z" fill="#666"/><path d="M723.7 115 h5 l-2.5 3z" fill="#666"/><path d="M762.7 115 h5 l-2.5 3z" fill="#666"/><path d="M811.1 115 h5 l-2.5 3z" fill="#666"/><path d="M901.9 115 h5 l-2.5 3z" fill="#666"/><path d="M946.5 115 h5 l-2.5 3z" fill="#666"/><path d="M993.1 115 h5 l-2.5 3z" fill="#666"/><path d="M1037.0 115 h5 l-2.5 3z" fill="#666"/><path d="M1165.1 115 h5 l-2.5 3z" fill="#666"/></svg>
<svg style="left:0;top:0" width="1366" height="768"><path fill-rule="evenodd" d="M902.90 296.40 L904.40 296.60 L905.57 294.88 L907.73 296.13 L906.82 298.01 L907.75 299.20 L908.32 300.60 L910.40 300.75 L910.40 303.25 L908.32 303.40 L907.75 304.80 L906.82 305.99 L907.73 307.87 L905.57 309.12 L904.40 307.40 L902.90 307.60 L901.40 307.40 L900.23 309.12 L898.07 307.87 L898.98 305.99 L898.05 304.80 L897.48 303.40 L895.40 303.25 L895.40 300.75 L897.48 300.60 L898.05 299.20 L898.98 298.01 L898.07 296.13 L900.23 294.88 L901.40 296.60Z M905.60 302.00 A2.7 2.7 0 1 0 900.20 302.00 A2.7 2.7 0 1 0 905.60 302.00Z" fill="#c9c7c7" stroke="#444" stroke-width="0.9" stroke-linejoin="round"/><path fill-rule="evenodd" d="M1328.90 296.60 L1330.40 296.80 L1331.57 295.08 L1333.73 296.33 L1332.82 298.21 L1333.75 299.40 L1334.32 300.80 L1336.40 300.95 L1336.40 303.45 L1334.32 303.60 L1333.75 305.00 L1332.82 306.19 L1333.73 308.07 L1331.57 309.32 L1330.40 307.60 L1328.90 307.80 L1327.40 307.60 L1326.23 309.32 L1324.07 308.07 L1324.98 306.19 L1324.05 305.00 L1323.48 303.60 L1321.40 303.45 L1321.40 300.95 L1323.48 300.80 L1324.05 299.40 L1324.98 298.21 L1324.07 296.33 L1326.23 295.08 L1327.40 296.80Z M1331.60 302.20 A2.7 2.7 0 1 0 1326.20 302.20 A2.7 2.7 0 1 0 1331.60 302.20Z" fill="#c9c7c7" stroke="#444" stroke-width="0.9" stroke-linejoin="round"/><path fill-rule="evenodd" d="M1328.80 524.80 L1330.30 525.00 L1331.47 523.28 L1333.63 524.53 L1332.72 526.41 L1333.65 527.60 L1334.22 529.00 L1336.30 529.15 L1336.30 531.65 L1334.22 531.80 L1333.65 533.20 L1332.72 534.39 L1333.63 536.27 L1331.47 537.52 L1330.30 535.80 L1328.80 536.00 L1327.30 535.80 L1326.13 537.52 L1323.97 536.27 L1324.88 534.39 L1323.95 533.20 L1323.38 531.80 L1321.30 531.65 L1321.30 529.15 L1323.38 529.00 L1323.95 527.60 L1324.88 526.41 L1323.97 524.53 L1326.13 523.28 L1327.30 525.00Z M1331.50 530.40 A2.7 2.7 0 1 0 1326.10 530.40 A2.7 2.7 0 1 0 1331.50 530.40Z" fill="#c9c7c7" stroke="#444" stroke-width="0.9" stroke-linejoin="round"/><path fill-rule="evenodd" d="M1349.00 205.40 L1351.03 205.68 L1352.65 203.26 L1355.61 204.97 L1354.33 207.58 L1355.58 209.20 L1356.36 211.10 L1359.26 211.29 L1359.26 214.71 L1356.36 214.90 L1355.58 216.80 L1354.33 218.42 L1355.61 221.03 L1352.65 222.74 L1351.03 220.32 L1349.00 220.60 L1346.97 220.32 L1345.35 222.74 L1342.39 221.03 L1343.67 218.42 L1342.42 216.80 L1341.64 214.90 L1338.74 214.71 L1338.74 211.29 L1341.64 211.10 L1342.42 209.20 L1343.67 207.58 L1342.39 204.97 L1345.35 203.26 L1346.97 205.68Z M1352.80 213.00 A3.8 3.8 0 1 0 1345.20 213.00 A3.8 3.8 0 1 0 1352.80 213.00Z" fill="#c8c6c6" stroke="#3a3a3a" stroke-width="1.1" stroke-linejoin="round"/><rect x="27.8" y="160.8" width="10.6" height="14.4" rx="1.2" fill="#fff" stroke="#9a9a9a" stroke-width="1"/><rect x="29.3" y="162.5" width="1.6" height="2.5" fill="#555"/><rect x="35" y="162.5" width="1.6" height="2.5" fill="#555"/><line x1="29.3" y1="166.5" x2="36.8" y2="166.5" stroke="#ccc"/><rect x="29.3" y="168.3" width="2.5" height="1.4" fill="#ccc"/><rect x="29.3" y="171.3" width="2.5" height="1.4" fill="#ccc"/><path d="M35 170.5 H41 M38 167.5 V173.5" stroke="#1aa34a" stroke-width="1.4"/><rect x="200.8" y="161.7" width="14.6" height="10.6" rx="0.8" fill="#fff" stroke="#8a8a8a" stroke-width="1"/><rect x="201.8" y="162.7" width="12.6" height="8.6" fill="none" stroke="#6cc4f0" stroke-width="0.9"/><rect x="202.8" y="166.7" width="5" height="4" fill="#d4d4d4"/><rect x="208.3" y="163.5" width="5" height="7" fill="#eee"/><line x1="202.3" y1="174.5" x2="214.3" y2="174.5" stroke="#999" stroke-width="1"/><rect x="278.7" y="161.7" width="14.6" height="10.6" rx="0.8" fill="#fff" stroke="#8a8a8a" stroke-width="1"/><rect x="279.7" y="162.7" width="12.6" height="8.6" fill="none" stroke="#6cc4f0" stroke-width="0.9"/><rect x="280.7" y="166.7" width="5" height="4" fill="#d4d4d4"/><rect x="286.2" y="163.5" width="5" height="7" fill="#eee"/><line x1="280.2" y1="174.5" x2="292.2" y2="174.5" stroke="#999" stroke-width="1"/><rect x="358.8" y="160.5" width="12" height="14.8" rx="1.2" fill="#8fc3ee" stroke="#3b86c9" stroke-width="1"/><rect x="361.8" y="164.5" width="6" height="3" fill="#fff" stroke="#3b86c9" stroke-width="0.8"/><rect x="468.7" y="160.5" width="12" height="14.8" rx="1.2" fill="#f6b3b6" stroke="#e06a6e" stroke-width="1"/><rect x="471.7" y="164.5" width="6" height="3" fill="#fff" stroke="#e06a6e" stroke-width="0.8"/><rect x="569.8" y="168.8" width="14.3" height="5.4" rx="0.8" fill="#fff" stroke="#8a8a8a" stroke-width="1"/><rect x="579.5" y="170.2" width="2" height="1" fill="#555"/><path d="M576.5 160 V169 M573.5 166.2 L576.5 169.2 L579.5 166.2" fill="none" stroke="#5aa7e0" stroke-width="1"/><rect x="768" y="160.3" width="9.5" height="13.8" fill="#aaa"/><rect x="766.5" y="162" width="9" height="13.8" fill="#fff" stroke="#999" stroke-width="1"/><line x1="771" y1="166.5" x2="771" y2="173" stroke="#444" stroke-width="0.9"/><line x1="768.3" y1="167.5" x2="773.8" y2="166" stroke="#444" stroke-width="0.8"/><circle cx="768.5" cy="171" r="1.3" fill="#f39a4a"/><circle cx="773.5" cy="169.5" r="1.3" fill="#f39a4a"/><path d="M1157.5 168 H1166.5 C1166.5 164 1164.5 161.9 1161.2 161.9 C1157.6 161.9 1155.6 164.5 1155.6 168.2 C1155.6 172 1157.8 174.3 1161.4 174.3 C1163.5 174.3 1165 173.6 1166.3 172.5" fill="none" stroke="#111" stroke-width="1.7"/><path d="M1157.8 166.6 C1158 164.5 1159.4 163.4 1161.2 163.4 C1163 163.4 1164.5 164.5 1164.7 166.6Z" fill="#ffd800"/><circle cx="1164" cy="161" r="1.2" fill="#ffd800"/><circle cx="1154.5" cy="165.6" r="1" fill="#ffd800"/><circle cx="1157.5" cy="175" r="0.9" fill="#ffd800"/><rect x="1016" y="352.8" width="2" height="8" fill="#111"/><rect x="1013" y="363.1" width="4" height="1.3" fill="#333"/><rect x="1013" y="383.2" width="4" height="1.3" fill="#333"/><rect x="1013" y="402.1" width="4" height="1.3" fill="#333"/><rect x="1013" y="422.2" width="4" height="1.3" fill="#333"/><rect x="1013" y="442.4" width="4" height="1.3" fill="#333"/><rect x="1015" y="373.2" width="2" height="1" fill="#555"/><rect x="1015" y="392.7" width="2" height="1" fill="#555"/><rect x="1015" y="412.2" width="2" height="1" fill="#555"/><rect x="1015" y="432.4" width="2" height="1" fill="#555"/><rect x="1032.3" y="443" width="2" height="6" fill="#111"/><rect x="1047.3" y="443" width="2" height="6" fill="#111"/><rect x="1062.3" y="443" width="2" height="6" fill="#111"/><rect x="1077.3" y="443" width="2" height="6" fill="#111"/><rect x="1092.3" y="443" width="2" height="6" fill="#111"/><rect x="1107.3" y="443" width="2" height="6" fill="#111"/><rect x="1122.3" y="443" width="2" height="6" fill="#111"/><rect x="1137.3" y="443" width="2" height="6" fill="#111"/><rect x="1152.3" y="443" width="2" height="6" fill="#111"/><rect x="1167.3" y="443" width="2" height="8" fill="#111"/><rect x="1182.3" y="443" width="2" height="6" fill="#111"/><rect x="1197.3" y="443" width="2" height="6" fill="#111"/><rect x="1212.3" y="443" width="2" height="6" fill="#111"/><rect x="1227.3" y="443" width="2" height="6" fill="#111"/><rect x="1242.3" y="443" width="2" height="6" fill="#111"/><rect x="1257.3" y="443" width="2" height="6" fill="#111"/><rect x="1272.3" y="443" width="2" height="6" fill="#111"/><rect x="1287.3" y="443" width="2" height="6" fill="#111"/><rect x="1302.3" y="443" width="2" height="6" fill="#111"/><rect x="1143.9" y="337.8" width="48.3" height="12.2" fill="#fff" stroke="#fbbf24" stroke-width="1"/><line x1="1167.5" y1="350.5" x2="1167.5" y2="360.5" stroke="#fbbf24" stroke-width="1"/><text x="1145" y="347.9" font-family="Liberation Sans" font-size="11" fill="#f9c033" textLength="40" lengthAdjust="spacingAndGlyphs">413,22 €</text><text transform="translate(1159.5 461.5) rotate(-38)" x="0" y="0" font-family="Liberation Sans" font-size="10.5" fill="#222" text-anchor="middle" dominant-baseline="middle">600</text><rect x="1024.5" y="581" width="2" height="10" fill="#111"/><rect x="1021" y="590.8" width="4" height="1.3" fill="#333"/><rect x="1021" y="639.0" width="4" height="1.3" fill="#333"/><rect x="1021" y="688.6" width="4" height="1.3" fill="#333"/><rect x="1023" y="615.0" width="2" height="1" fill="#555"/><rect x="1023" y="663.8" width="2" height="1" fill="#555"/><rect x="1054.6" y="689" width="2" height="6" fill="#111"/><rect x="1083.8" y="689" width="2" height="6" fill="#111"/><rect x="1113.1" y="689" width="2" height="6" fill="#111"/><rect x="1142.3" y="689" width="2" height="6" fill="#111"/><rect x="1171.5" y="689" width="2" height="8" fill="#111"/><rect x="1200.8" y="689" width="2" height="6" fill="#111"/><rect x="1230.0" y="689" width="2" height="6" fill="#111"/><rect x="1259.2" y="689" width="2" height="6" fill="#111"/><rect x="1288.4" y="689" width="2" height="6" fill="#111"/><rect x="1143.7" y="569.2" width="57.3" height="12.4" fill="#fff" stroke="#19b5e6" stroke-width="1"/><line x1="1172" y1="581.6" x2="1172" y2="591.5" stroke="#19b5e6" stroke-width="1"/><text x="1145.5" y="579" font-family="Liberation Sans" font-size="11" fill="#1ab4e4" textLength="51" lengthAdjust="spacingAndGlyphs">1.000,00 €</text><text transform="translate(1163 707.3) rotate(-37)" x="0" y="0" font-family="Liberation Sans" font-size="10.5" fill="#222" text-anchor="middle" dominant-baseline="middle">700</text><rect x="3.7" y="749.7" width="15" height="14.6" fill="#fff" stroke="#555" stroke-width="1"/><text x="11.2" y="761.5" font-family="Liberation Sans" font-size="12" fill="#777" text-anchor="middle">C</text><rect x="25.7" y="750.8" width="14.7" height="10.5" fill="#fff" stroke="#666" stroke-width="1"/><line x1="27" y1="763.3" x2="39" y2="763.3" stroke="#666" stroke-width="0.9"/><path d="M100 753 Q106 747.5 112 753" fill="none" stroke="#111" stroke-width="1.4"/><path d="M102.2 755 Q106 751.8 109.8 755" fill="none" stroke="#111" stroke-width="1.2"/><circle cx="106" cy="759.5" r="3.8" fill="none" stroke="#1a7fd8" stroke-width="2.2"/><circle cx="201.9" cy="756.9" r="7.3" fill="none" stroke="#222" stroke-width="1"/><path d="M199.3 752.8 L205.6 756.9 L199.3 761Z" fill="#9ccbf0" stroke="#1a7fd8" stroke-width="1"/><path d="M1181 750.2 L1188.3 763 H1173.7Z" fill="none" stroke="#555" stroke-width="1.1" stroke-linejoin="round"/><line x1="1181" y1="754.5" x2="1181" y2="759" stroke="#333" stroke-width="1"/><circle cx="1181" cy="761" r="0.6" fill="#333"/><path d="M1195.5 751 H1200.5 C1205 751 1207.5 753.5 1207.5 757 C1207.5 760.5 1205 763 1200.5 763 H1195.5Z M1198.7 754 V760 H1200.3 C1202.7 760 1204 759 1204 757 C1204 755 1202.7 754 1200.3 754Z" fill="#777" fill-rule="evenodd"/><rect x="1209" y="750.5" width="2" height="2" fill="#aaa"/><rect x="1217.3" y="751.8" width="15.4" height="10.2" fill="#fff" stroke="#555" stroke-width="1"/><path d="M1217.3 752 L1225 758 L1232.7 752" fill="none" stroke="#555" stroke-width="1"/><path d="M1340 753 V750 H1350.5 V762" fill="none" stroke="#666" stroke-width="1"/><rect x="1337" y="753.5" width="10" height="10" fill="#fff" stroke="#666" stroke-width="1"/><rect x="1336.5" y="757" width="9" height="7" fill="#fff" stroke="#555" stroke-width="1"/><rect x="1340.5" y="760" width="1.5" height="1.5" fill="#555"/><path d="M13.5 732 L10 734" fill="none" stroke="#444" stroke-width="1.3"/><path d="M472.5 732 L476 734" fill="none" stroke="#444" stroke-width="1.3"/></svg>

<div class="t" style="left:543.3px;top:9.0px;font-size:13px;transform:scaleX(0.8443);transform-origin:0 0;color:#fff;font-weight:normal;">CONTASOL - XD1 - EMPRESA DE DEMOSTRACION, S.L. - 2023</div>
<div class="t" style="left:14.2px;top:35.0px;font-size:12.5px;transform:scaleX(0.9167);transform-origin:0 0;color:#fff;font-weight:normal;">Archivo</div>
<div class="t" style="left:81.4px;top:35.0px;font-size:12.5px;transform:scaleX(0.9666);transform-origin:0 0;color:#fff;font-weight:normal;">Diario</div>
<div class="t" style="left:140.6px;top:35.0px;font-size:12.5px;transform:scaleX(0.8766);transform-origin:0 0;color:#fff;font-weight:normal;">Tesorería</div>
<div class="t" style="left:214.5px;top:35.0px;font-size:12.5px;transform:scaleX(0.9605);transform-origin:0 0;color:#fff;font-weight:normal;">Analítica</div>
<div class="t" style="left:288.2px;top:35.0px;font-size:12.5px;transform:scaleX(0.9035);transform-origin:0 0;color:#fff;font-weight:normal;">Empresa</div>
<div class="t" style="left:361.0px;top:35.0px;font-size:12.5px;transform:scaleX(0.9771);transform-origin:0 0;color:#fff;font-weight:normal;">Entorno</div>
<div class="t" style="left:512.4px;top:35.0px;font-size:12.5px;transform:scaleX(0.9556);transform-origin:0 0;color:#fff;font-weight:normal;">Utilidades</div>
<div class="t" style="left:592.3px;top:35.0px;font-size:12.5px;transform:scaleX(0.9563);transform-origin:0 0;color:#fff;font-weight:normal;">Facturación</div>
<div class="t" style="left:682.6px;top:35.0px;font-size:12.5px;transform:scaleX(0.9136);transform-origin:0 0;color:#fff;font-weight:normal;">Asistencia Técnica</div>
<div class="t" style="left:431.4px;top:35.0px;font-size:12.5px;transform:scaleX(0.9668);transform-origin:0 0;color:#1e1e1e;font-weight:normal;">Impresión</div>
<div class="t" style="left:1227.5px;top:32.0px;font-size:12px;transform:scaleX(0.9066);transform-origin:0 0;color:#5a5a5a;font-weight:normal;">Buscar</div>
<div class="t" style="left:7.0px;top:96.0px;font-size:11.5px;transform:scaleX(1.0002);transform-origin:0 0;color:#222;font-weight:normal;">Asistente</div>
<div class="t" style="left:13.9px;top:111.0px;font-size:11.5px;transform:scaleX(1.0716);transform-origin:0 0;color:#222;font-weight:normal;">virtual</div>
<div class="t" style="left:12.9px;top:131.0px;font-size:11.5px;transform:scaleX(1.0103);transform-origin:0 0;color:#222;font-weight:normal;">Atenea</div>
<div class="t" style="left:69.5px;top:96.0px;font-size:11.5px;transform:scaleX(1.0334);transform-origin:0 0;color:#222;font-weight:normal;">Diario</div>
<div class="t" style="left:107.6px;top:96.0px;font-size:11.5px;transform:scaleX(1.0054);transform-origin:0 0;color:#222;font-weight:normal;">Mayor</div>
<div class="t" style="left:146.4px;top:96.0px;font-size:11.5px;transform:scaleX(0.9354);transform-origin:0 0;color:#222;font-weight:normal;">Sumas y</div>
<div class="t" style="left:145.4px;top:111.0px;font-size:11.5px;transform:scaleX(0.9605);transform-origin:0 0;color:#222;font-weight:normal;">Saldos</div>
<div class="t" style="left:114.5px;top:131.0px;font-size:11.5px;transform:scaleX(0.9932);transform-origin:0 0;color:#222;font-weight:normal;">Libros</div>
<div class="t" style="left:205.5px;top:96.0px;font-size:11.5px;transform:scaleX(0.9518);transform-origin:0 0;color:#222;font-weight:normal;">Balance de</div>
<div class="t" style="left:204.5px;top:111.0px;font-size:11.5px;transform:scaleX(1.0109);transform-origin:0 0;color:#222;font-weight:normal;">Situación</div>
<div class="t" style="left:273.3px;top:96.0px;font-size:11.5px;transform:scaleX(0.9677);transform-origin:0 0;color:#222;font-weight:normal;">Pérdidas y</div>
<div class="t" style="left:268.6px;top:111.0px;font-size:11.5px;transform:scaleX(0.9618);transform-origin:0 0;color:#222;font-weight:normal;">Ganancias</div>
<div class="t" style="left:338.5px;top:96.0px;font-size:11.5px;transform:scaleX(0.9847);transform-origin:0 0;color:#222;font-weight:normal;">Estado de</div>
<div class="t" style="left:337.8px;top:111.0px;font-size:11.5px;transform:scaleX(0.9624);transform-origin:0 0;color:#222;font-weight:normal;">Cambios</div>
<div class="t" style="left:402.3px;top:96.0px;font-size:11.5px;transform:scaleX(0.9830);transform-origin:0 0;color:#222;font-weight:normal;">Estado</div>
<div class="t" style="left:397.9px;top:111.0px;font-size:11.5px;transform:scaleX(1.0400);transform-origin:0 0;color:#222;font-weight:normal;">de flujos</div>
<div class="t" style="left:448.5px;top:96.0px;font-size:11.5px;transform:scaleX(1.0042);transform-origin:0 0;color:#222;font-weight:normal;">Memoria</div>
<div class="t" style="left:499.3px;top:96.0px;font-size:11.5px;transform:scaleX(1.0163);transform-origin:0 0;color:#222;font-weight:normal;">Auxiliar</div>
<div class="t" style="left:329.7px;top:131.0px;font-size:11.5px;transform:scaleX(0.9802);transform-origin:0 0;color:#222;font-weight:normal;">Cuentas anuales</div>
<div class="t" style="left:559.2px;top:96.0px;font-size:11.5px;transform:scaleX(1.0070);transform-origin:0 0;color:#222;font-weight:normal;">Registro</div>
<div class="t" style="left:552.6px;top:111.0px;font-size:11.5px;transform:scaleX(1.0364);transform-origin:0 0;color:#222;font-weight:normal;">Mercantil</div>
<div class="t" style="left:558.4px;top:131.0px;font-size:11.5px;transform:scaleX(1.0344);transform-origin:0 0;color:#222;font-weight:normal;">Depósito</div>
<div class="t" style="left:625.2px;top:96.0px;font-size:11.5px;transform:scaleX(1.0135);transform-origin:0 0;color:#222;font-weight:normal;">Impuesto sobre</div>
<div class="t" style="left:631.3px;top:111.0px;font-size:11.5px;transform:scaleX(0.9715);transform-origin:0 0;color:#222;font-weight:normal;">Sociedades</div>
<div class="t" style="left:714.2px;top:96.0px;font-size:11.5px;transform:scaleX(0.9634);transform-origin:0 0;color:#222;font-weight:normal;">I.V.A.</div>
<div class="t" style="left:749.4px;top:96.0px;font-size:11.5px;transform:scaleX(0.9126);transform-origin:0 0;color:#222;font-weight:normal;">I.G.I.C.</div>
<div class="t" style="left:797.3px;top:96.0px;font-size:11.5px;transform:scaleX(0.9320);transform-origin:0 0;color:#222;font-weight:normal;">I.R.P.F.</div>
<div class="t" style="left:846.0px;top:96.0px;font-size:11.5px;transform:scaleX(0.9909);transform-origin:0 0;color:#222;font-weight:normal;">Presentación</div>
<div class="t" style="left:850.4px;top:111.0px;font-size:11.5px;transform:scaleX(1.0035);transform-origin:0 0;color:#222;font-weight:normal;">por Lotes</div>
<div class="t" style="left:734.6px;top:131.0px;font-size:11.5px;transform:scaleX(0.9714);transform-origin:0 0;color:#222;font-weight:normal;">Declaraciones</div>
<div class="t" style="left:927.1px;top:96.0px;font-size:11.5px;transform:scaleX(0.9656);transform-origin:0 0;color:#222;font-weight:normal;">Tesorería</div>
<div class="t" style="left:979.1px;top:96.0px;font-size:11.5px;transform:scaleX(0.9489);transform-origin:0 0;color:#222;font-weight:normal;">Bienes</div>
<div class="t" style="left:1018.2px;top:96.0px;font-size:11.5px;transform:scaleX(1.0026);transform-origin:0 0;color:#222;font-weight:normal;">Analítica</div>
<div class="t" style="left:973.2px;top:131.0px;font-size:11.5px;transform:scaleX(1.0130);transform-origin:0 0;color:#222;font-weight:normal;">Informes</div>
<div class="t" style="left:1081.3px;top:96.0px;font-size:11.5px;transform:scaleX(1.0233);transform-origin:0 0;color:#222;font-weight:normal;">Diseñador</div>
<div class="t" style="left:1077.5px;top:111.0px;font-size:11.5px;transform:scaleX(1.0140);transform-origin:0 0;color:#222;font-weight:normal;">de informes</div>
<div class="t" style="left:1144.5px;top:96.0px;font-size:11.5px;transform:scaleX(0.9950);transform-origin:0 0;color:#222;font-weight:normal;">Etiquetas</div>
<div class="t" style="left:1116.0px;top:131.0px;font-size:11.5px;transform:scaleX(1.0326);transform-origin:0 0;color:#222;font-weight:normal;">Auxiliar</div>
<div class="t" style="left:43.2px;top:161.0px;font-size:12px;transform:scaleX(0.9873);transform-origin:0 0;color:#1a1a1a;font-weight:normal;">Introducción de asientos</div>
<div class="t" style="left:218.3px;top:161.0px;font-size:12px;transform:scaleX(0.9841);transform-origin:0 0;color:#1a1a1a;font-weight:normal;">Diario</div>
<div class="t" style="left:296.4px;top:161.0px;font-size:12px;transform:scaleX(0.9758);transform-origin:0 0;color:#1a1a1a;font-weight:normal;">Mayor</div>
<div class="t" style="left:375.5px;top:161.0px;font-size:12px;transform:scaleX(0.9708);transform-origin:0 0;color:#1a1a1a;font-weight:normal;">Repercutido</div>
<div class="t" style="left:485.3px;top:161.0px;font-size:12px;transform:scaleX(0.9958);transform-origin:0 0;color:#1a1a1a;font-weight:normal;">Soportado</div>
<div class="t" style="left:587.1px;top:161.0px;font-size:12px;transform:scaleX(0.9502);transform-origin:0 0;color:#1a1a1a;font-weight:normal;">Proceso automático de cierre</div>
<div class="t" style="left:782.6px;top:161.0px;font-size:12px;transform:scaleX(0.8955);transform-origin:0 0;color:#1a1a1a;font-weight:normal;">Sumas y Saldos</div>
<div class="t" style="left:1025.5px;top:161.0px;font-size:12px;transform:scaleX(0.9712);transform-origin:0 0;color:#1a1a1a;font-weight:normal;">Consulta registros</div>
<div class="t" style="left:1171.4px;top:161.0px;font-size:12px;transform:scaleX(0.9644);transform-origin:0 0;color:#1a1a1a;font-weight:normal;">Notificaciones electrónicas</div>
<div class="t" style="left:16.2px;top:205.0px;font-size:15px;transform:scaleX(1.0492);transform-origin:0 0;color:#000;font-weight:normal;">Herramientas</div>
<div class="t" style="left:180.5px;top:205.0px;font-size:15px;transform:scaleX(1.0402);transform-origin:0 0;color:#4a7bd8;font-weight:bold;">Resumen</div>
<div class="t" style="left:320.0px;top:205.0px;font-size:15px;transform:scaleX(1.0621);transform-origin:0 0;color:#000;font-weight:normal;">Noticias</div>
<div class="t" style="left:452.7px;top:205.0px;font-size:15px;transform:scaleX(1.0054);transform-origin:0 0;color:#000;font-weight:normal;">Asistencia técnica</div>
<div class="t" style="left:1180.2px;top:197.0px;font-size:12px;transform:scaleX(0.9480);transform-origin:0 0;color:#222;font-weight:normal;">Ejercicio actual</div>
<div class="t" style="left:1180.2px;top:212.0px;font-size:13px;transform:scaleX(0.9612);transform-origin:0 0;color:#111;font-weight:bold;">2023</div>
<div class="t" style="left:23.0px;top:250.0px;font-size:19px;transform:scaleX(0.9498);transform-origin:0 0;color:#000;font-weight:normal;">Resumen</div>
<div class="t" style="left:510.6px;top:250.0px;font-size:19px;transform:scaleX(0.9414);transform-origin:0 0;color:#000;font-weight:normal;">Estadísticas</div>
<div class="t" style="left:22.6px;top:295.0px;font-size:15px;transform:scaleX(0.9903);transform-origin:0 0;color:#fff;font-weight:normal;">DIARIO</div>
<div class="t" style="left:260.6px;top:295.0px;font-size:15px;transform:scaleX(0.9340);transform-origin:0 0;color:#fff;font-weight:normal;">OTROS</div>
<div class="t" style="left:21.8px;top:507.0px;font-size:15px;transform:scaleX(0.9697);transform-origin:0 0;color:#fff;font-weight:normal;">IVA / RETENCIONES</div>
<div class="t" style="left:23.3px;top:697.0px;font-size:15px;transform:scaleX(0.9425);transform-origin:0 0;color:#fff;font-weight:normal;">OBLIGACIONES FISCALES</div>
<div class="t" style="left:25.2px;top:338.0px;font-size:12px;transform:scaleX(0.9748);transform-origin:0 0;color:#111;font-weight:normal;">Apuntes</div>
<div class="t" style="left:25.2px;top:366.0px;font-size:12px;transform:scaleX(0.9897);transform-origin:0 0;color:#111;font-weight:normal;">Apuntes sin puntear</div>
<div class="t" style="left:25.2px;top:394.0px;font-size:12px;transform:scaleX(0.9790);transform-origin:0 0;color:#111;font-weight:normal;">Apuntes de IVA soportado</div>
<div class="t" style="left:25.2px;top:422.0px;font-size:12px;transform:scaleX(0.9739);transform-origin:0 0;color:#111;font-weight:normal;">Apuntes de IVA repercutido</div>
<div class="t" style="left:25.2px;top:450.0px;font-size:12px;transform:scaleX(0.9826);transform-origin:0 0;color:#111;font-weight:normal;">Apuntes de retención</div>
<div class="t" style="left:262.8px;top:338.0px;font-size:12px;transform:scaleX(0.9377);transform-origin:0 0;color:#111;font-weight:normal;">Efectos comerciales a cobrar</div>
<div class="t" style="left:262.8px;top:366.0px;font-size:12px;transform:scaleX(0.9365);transform-origin:0 0;color:#111;font-weight:normal;">Efectos comerciales a pagar</div>
<div class="t" style="left:262.8px;top:394.0px;font-size:12px;transform:scaleX(0.9590);transform-origin:0 0;color:#111;font-weight:normal;">Bienes de inmovilizado</div>
<div class="t" style="left:262.8px;top:422.0px;font-size:12px;transform:scaleX(0.9608);transform-origin:0 0;color:#111;font-weight:normal;">Bienes contabilizados</div>
<div class="t" style="left:25.1px;top:550.0px;font-size:12px;transform:scaleX(0.9650);transform-origin:0 0;color:#111;font-weight:normal;">Registros de IVA soportado</div>
<div class="t" style="left:25.1px;top:578.0px;font-size:12px;transform:scaleX(0.9649);transform-origin:0 0;color:#111;font-weight:normal;">Registros de IVA repercutido</div>
<div class="t" style="left:25.1px;top:606.0px;font-size:12px;transform:scaleX(0.9582);transform-origin:0 0;color:#111;font-weight:normal;">Registros de Retención</div>
<div class="t" style="left:519.3px;top:297.0px;font-size:13px;transform:scaleX(1.0151);transform-origin:0 0;color:#000;font-weight:normal;-webkit-text-stroke:0.3px #000;">Perdidas y ganancias (Gastos)</div>
<div class="t" style="left:956.9px;top:297.0px;font-size:13px;transform:scaleX(1.0434);transform-origin:0 0;color:#000;font-weight:normal;-webkit-text-stroke:0.3px #000;">Gastos desglosados por cuenta</div>
<div class="t" style="left:957.2px;top:525.0px;font-size:13px;transform:scaleX(1.0516);transform-origin:0 0;color:#000;font-weight:normal;-webkit-text-stroke:0.3px #000;">Ingresos desglosados por cuenta</div>
<div class="t" style="left:612.7px;top:348.0px;font-size:11px;transform:scaleX(1.0093);transform-origin:0 0;color:#222;font-weight:normal;">Aprovisionamientos</div>
<div class="t" style="left:747.0px;top:348.0px;font-size:11px;transform:scaleX(0.9753);transform-origin:0 0;color:#222;font-weight:normal;">Gastos financieros</div>
<div class="t" style="left:612.7px;top:365.0px;font-size:11px;transform:scaleX(0.9681);transform-origin:0 0;color:#222;font-weight:normal;">Gastos personal</div>
<div class="t" style="left:747.0px;top:365.0px;font-size:11px;transform:scaleX(0.9857);transform-origin:0 0;color:#222;font-weight:normal;">Otros gastos</div>
<div class="t" style="left:44.3px;top:751.0px;font-size:12px;transform:scaleX(0.9051);transform-origin:0 0;color:#222;font-weight:normal;">En Local</div>
<div class="t" style="left:117.7px;top:751.0px;font-size:12px;transform:scaleX(0.8851);transform-origin:0 0;color:#222;font-weight:normal;">Onda DELSOL</div>
<div class="t" style="left:1107.8px;top:751.0px;font-size:12px;transform:scaleX(0.9259);transform-origin:0 0;color:#333;font-weight:normal;">[Supervisor]</div>
<div class="t" style="left:1239.2px;top:751.0px;font-size:12px;transform:scaleX(0.9795);transform-origin:0 0;color:#333;font-weight:normal;">www.sdelsol.com</div>
<div class="t" style="left:207.4px;top:338.0px;font-size:12px;letter-spacing:0.000px;color:#222">6</div>
<div class="t" style="left:207.4px;top:366.0px;font-size:12px;letter-spacing:0.000px;color:#222">6</div>
<div class="t" style="left:207.4px;top:394.0px;font-size:12px;letter-spacing:0.000px;color:#222">1</div>
<div class="t" style="left:207.4px;top:422.0px;font-size:12px;letter-spacing:0.000px;color:#222">1</div>
<div class="t" style="left:207.4px;top:450.0px;font-size:12px;letter-spacing:0.000px;color:#222">0</div>
<div class="t" style="left:449.7px;top:338.0px;font-size:12px;letter-spacing:0.000px;color:#222">0</div>
<div class="t" style="left:449.7px;top:366.0px;font-size:12px;letter-spacing:0.000px;color:#222">0</div>
<div class="t" style="left:449.7px;top:394.0px;font-size:12px;letter-spacing:0.000px;color:#222">4</div>
<div class="t" style="left:449.7px;top:422.0px;font-size:12px;letter-spacing:0.000px;color:#222">0</div>
<div class="t" style="left:207.1px;top:550.0px;font-size:12px;letter-spacing:0.000px;color:#222">1</div>
<div class="t" style="left:207.1px;top:578.0px;font-size:12px;letter-spacing:0.000px;color:#222">1</div>
<div class="t" style="left:207.1px;top:606.0px;font-size:12px;letter-spacing:0.000px;color:#222">0</div>
<div class="t" style="left:967.9px;top:358.0px;font-size:11px;letter-spacing:-0.304px;color:#222">400,00 €</div>
<div class="t" style="left:967.9px;top:378.0px;font-size:11px;letter-spacing:-0.304px;color:#222">300,00 €</div>
<div class="t" style="left:967.9px;top:398.0px;font-size:11px;letter-spacing:-0.304px;color:#222">200,00 €</div>
<div class="t" style="left:967.9px;top:417.0px;font-size:11px;letter-spacing:-0.304px;color:#222">100,00 €</div>
<div class="t" style="left:980.0px;top:437.0px;font-size:11px;letter-spacing:-0.399px;color:#222">0,00 €</div>
<div class="t" style="left:969.4px;top:586.0px;font-size:11px;letter-spacing:-0.467px;color:#222">1.000,00 €</div>
<div class="t" style="left:977.2px;top:635.0px;font-size:11px;letter-spacing:-0.404px;color:#222">500,00 €</div>
<div class="t" style="left:989.2px;top:684.0px;font-size:11px;letter-spacing:-0.519px;color:#222">0,00 €</div>
</body></html>
